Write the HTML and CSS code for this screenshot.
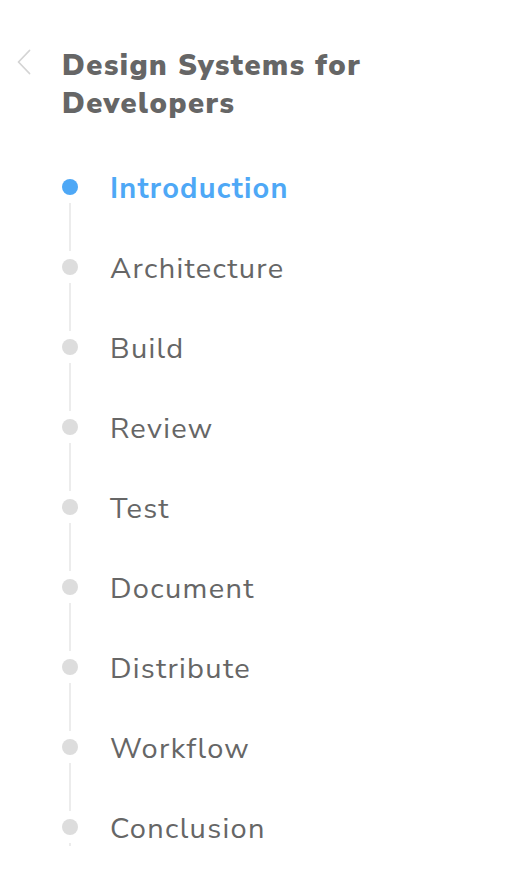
FILE: index.html
```html
<!DOCTYPE html>
<html lang="en">
<head>
<meta charset="utf-8">
<title>Design Systems for Developers</title>
<link rel="stylesheet" href="styles.css">
</head>
<body>
<aside class="sidebar">
  <header class="course-header">
    <a class="back" href="#" aria-label="Back">
      <svg width="16" height="26" viewBox="0 0 16 26" fill="none"><path d="M13.5 1.5 L2.5 13 L13.5 24.5" stroke="#d4d4d4" stroke-width="1.8" stroke-linecap="round" stroke-linejoin="round"/></svg>
    </a>
    <h1 class="course-title">Design Systems for Developers</h1>
  </header>
  <nav class="chapters">
    <ul class="chapter-list">
      <li class="chapter active"><span class="marker"><span class="dot"></span><span class="line"></span></span><span class="label">Introduction</span></li>
      <li class="chapter"><span class="marker"><span class="dot"></span><span class="line"></span></span><span class="label">Architecture</span></li>
      <li class="chapter"><span class="marker"><span class="dot"></span><span class="line"></span></span><span class="label">Build</span></li>
      <li class="chapter"><span class="marker"><span class="dot"></span><span class="line"></span></span><span class="label">Review</span></li>
      <li class="chapter"><span class="marker"><span class="dot"></span><span class="line"></span></span><span class="label">Test</span></li>
      <li class="chapter"><span class="marker"><span class="dot"></span><span class="line"></span></span><span class="label">Document</span></li>
      <li class="chapter"><span class="marker"><span class="dot"></span><span class="line"></span></span><span class="label">Distribute</span></li>
      <li class="chapter"><span class="marker"><span class="dot"></span><span class="line"></span></span><span class="label">Workflow</span></li>
      <li class="chapter"><span class="marker"><span class="dot"></span><span class="line"></span></span><span class="label">Conclusion</span></li>
    </ul>
  </nav>
</aside>
</body>
</html>
```
FILE: styles.css
```css
* { box-sizing: border-box; }
html, body { margin: 0; padding: 0; background: #fff; }
body {
  font-family: "Nunito Sans", Lato, "Open Sans", sans-serif;
  color: #666;
  width: 508px;
  height: 890px;
  overflow: hidden;
}
.sidebar {
  padding: 47px 0 0 16px;
}
.course-header {
  display: flex;
  align-items: flex-start;
}
.back {
  display: flex;
  width: 46px;
  padding-top: 2px;
}
.back svg { display: block; }
.course-title {
  margin: 0;
  font-size: 29px;
  font-weight: 900;
  line-height: 38px;
  letter-spacing: 1.5px;
  color: #666;
  width: 340px;
}
.chapters {
  margin-top: 56px;
  margin-left: 46px;
}
.chapter-list {
  list-style: none;
  margin: 0;
  padding: 0;
}
.chapter {
  display: flex;
  align-items: flex-start;
  height: 80px;
}
.marker {
  display: flex;
  flex-direction: column;
  align-items: center;
  width: 16px;
  flex: none;
}
.dot {
  width: 16px;
  height: 16px;
  border-radius: 50%;
  background: #dddddd;
}
.line {
  width: 2px;
  height: 48px;
  margin-top: 8px;
  background: #ececec;
}
.chapter:last-child .line { height: 3px; }
.label {
  margin-left: 32px;
  margin-top: -10px;
  font-size: 29px;
  line-height: 40px;
  letter-spacing: 1.3px;
  color: #666;
}
.active .dot { background: #4ea8f6; }
.active .label { color: #4ea8f6; font-weight: 700; letter-spacing: 1.2px; }
```
